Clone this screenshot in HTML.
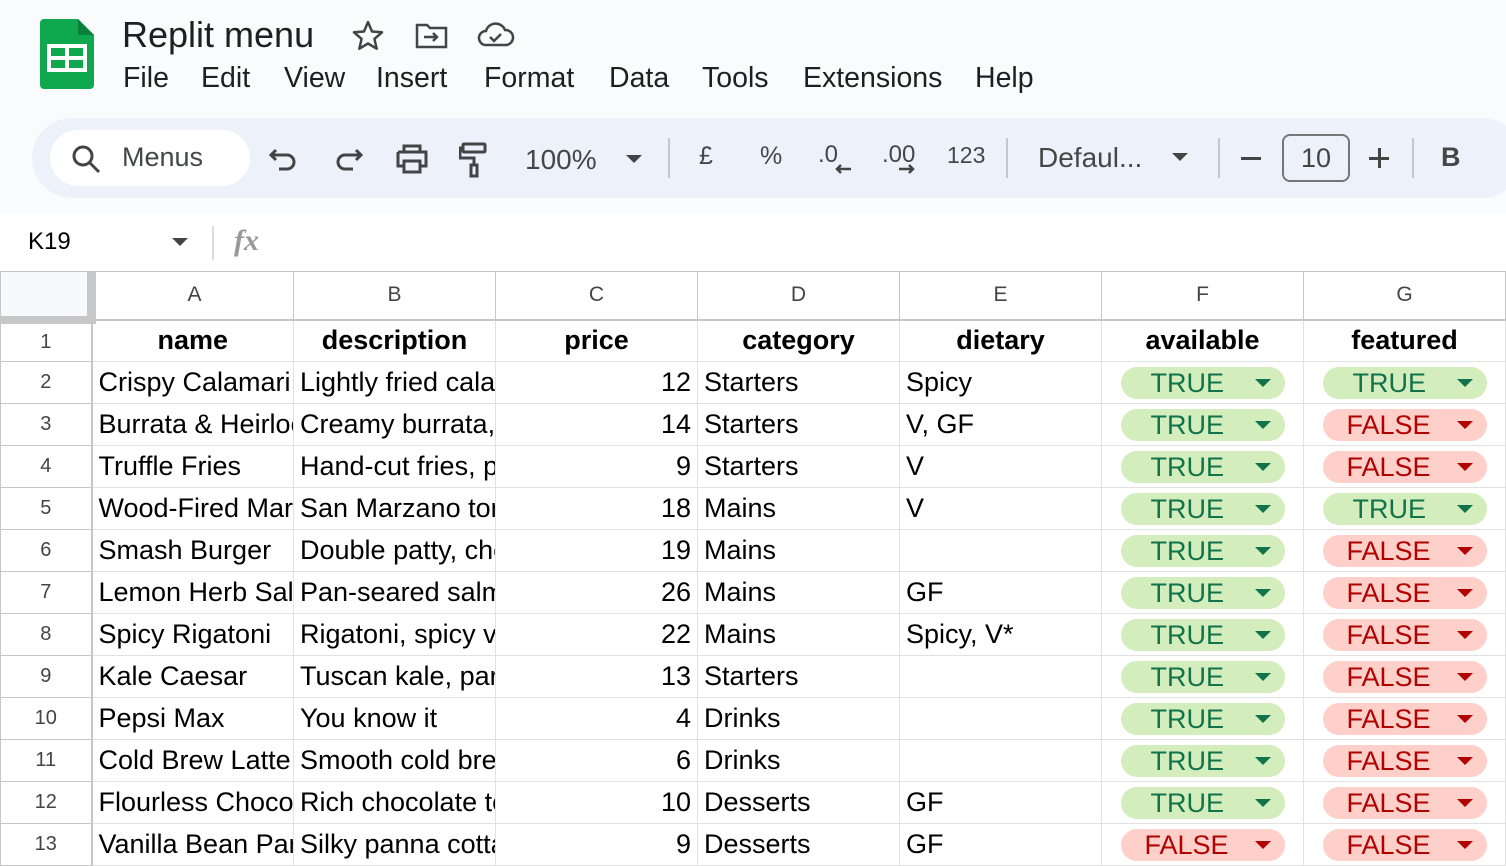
<!DOCTYPE html>
<html><head><meta charset="utf-8"><style>
*{margin:0;padding:0;box-sizing:border-box}
body{width:1506px;height:866px;overflow:hidden;background:#f9fbfd;font-family:"Liberation Sans",Arial,sans-serif;position:relative;color:#1f1f1f}
.abs{position:absolute}
.title{left:122px;top:14px;font-size:36px;color:#1f1f1f}
.menu{top:62px;font-size:28.5px;color:#1f1f1f}
.tb{left:32px;top:118px;width:1490px;height:80px;background:#edf2fa;border-radius:40px}
.search{left:50px;top:130px;width:200px;height:56px;background:#fff;border-radius:28px}
.ti{top:142px;font-size:27px;color:#444746}
.sep{width:2px;height:40px;background:#c7c7c7;top:138px}
.fb{left:0;top:213px;width:1506px;height:58px;background:#fff}
table{position:absolute;left:0;top:271px;width:1505px;border-collapse:collapse;table-layout:fixed;background:#fff}
td{border:1px solid #e1e1e1;height:42px;font-size:27px;white-space:nowrap;overflow:hidden;padding:0 6px;color:#000;max-width:202px}
tr.h td{height:48px;text-align:center;color:#444;font-size:21px;border-color:#c7c7c7;border-bottom:2px solid #c7c7c7}
td.r{text-align:center;color:#444;font-size:20px;border-right:2px solid #c7c7c7;border-color:#c7c7c7;padding:0}
td.b{font-weight:bold;text-align:center}
td.n{text-align:right}
.chip{display:block;margin:0 auto;width:164px;height:32px;border-radius:16px;position:relative;font-size:27px;line-height:32px;padding-left:30px;text-align:left}
.t{background:#d4edbc;color:#11734b}
.f{background:#ffcfc9;color:#b10202;padding-left:24px}
.chip:after{content:"";position:absolute;right:14px;top:12px;border-left:8px solid transparent;border-right:8px solid transparent;border-top:8px solid currentColor}
td.c{padding:0}
</style></head><body>
<svg class="abs" style="left:40px;top:19px" width="54" height="70" viewBox="0 0 54 70"><path d="M4 0h34l16 16v50a4 4 0 0 1-4 4H4a4 4 0 0 1-4-4V4a4 4 0 0 1 4-4z" fill="#0fa84f"/><path d="M38 0v16h16z" fill="#0a7f3a"/><rect x="9" y="27" width="36" height="24" fill="none" stroke="#fff" stroke-width="4"/><path d="M9 39h36M27 27v24" stroke="#fff" stroke-width="4"/></svg>
<div class="abs title">Replit menu</div>
<svg class="abs" style="left:352px;top:20px" width="32" height="30" viewBox="0 0 32 30"><path d="M16 2l4 9.5 10 .8-7.6 6.6 2.3 9.8L16 23.5l-8.7 5.2 2.3-9.8L2 12.3l10-.8z" fill="none" stroke="#444" stroke-width="2.5" stroke-linejoin="round"/></svg>
<svg class="abs" style="left:415px;top:22px" width="34" height="28" viewBox="0 0 34 28"><path d="M2 3h10l3 3h16v19H2z" fill="none" stroke="#444" stroke-width="2.5"/><path d="M9 15h13M18 11l4 4-4 4" fill="none" stroke="#444" stroke-width="2.5"/></svg>
<svg class="abs" style="left:477px;top:22px" width="38" height="26" viewBox="0 0 38 26"><path d="M9 23a7 7 0 0 1 0-14 10 10 0 0 1 19-1 7.5 7.5 0 0 1 1 15z" fill="none" stroke="#444" stroke-width="2.5"/><path d="M13 15l4 4 7-7" fill="none" stroke="#444" stroke-width="2.5"/></svg>
<div class="abs menu" style="left:123px">File</div>
<div class="abs menu" style="left:201px">Edit</div>
<div class="abs menu" style="left:284px">View</div>
<div class="abs menu" style="left:376px">Insert</div>
<div class="abs menu" style="left:484px">Format</div>
<div class="abs menu" style="left:609px">Data</div>
<div class="abs menu" style="left:702px">Tools</div>
<div class="abs menu" style="left:803px">Extensions</div>
<div class="abs menu" style="left:975px">Help</div>
<div class="abs tb"></div>
<div class="abs search"></div>
<svg class="abs" style="left:70px;top:143px" width="32" height="32" viewBox="0 0 32 32"><circle cx="13" cy="13" r="9" fill="none" stroke="#444" stroke-width="3"/><path d="M20 20l9 9" stroke="#444" stroke-width="3"/></svg>
<div class="abs ti" style="left:122px">Menus</div>
<svg class="abs" style="left:268px;top:144px" width="32" height="30" viewBox="0 0 32 30"><path d="M8 6L3 11l5 5M3 11h16a7 7 0 0 1 0 14H11" fill="none" stroke="#444" stroke-width="3"/></svg>
<svg class="abs" style="left:332px;top:144px" width="32" height="30" viewBox="0 0 32 30"><path d="M24 6l5 5-5 5M29 11H13a7 7 0 0 0 0 14h8" fill="none" stroke="#444" stroke-width="3"/></svg>
<svg class="abs" style="left:395px;top:143px" width="34" height="32" viewBox="0 0 34 32"><path d="M9 9V3h16v6M3 9h28v14h-6M9 23H3V9" fill="none" stroke="#444" stroke-width="3"/><rect x="9" y="18" width="16" height="11" fill="none" stroke="#444" stroke-width="3"/></svg>
<svg class="abs" style="left:459px;top:142px" width="30" height="36" viewBox="0 0 30 36"><rect x="4" y="2" width="22" height="8" rx="1" fill="none" stroke="#444" stroke-width="3"/><path d="M4 6H1v10h14v7" fill="none" stroke="#444" stroke-width="3"/><rect x="12" y="23" width="6" height="11" fill="none" stroke="#444" stroke-width="3"/></svg>
<div class="abs ti" style="left:525px;top:144px;font-size:28px">100%</div>
<div class="abs" style="left:626px;top:155px;border-left:8px solid transparent;border-right:8px solid transparent;border-top:8px solid #444"></div>
<div class="abs sep" style="left:668px"></div>
<div class="abs ti" style="left:699px;font-size:25px">£</div>
<div class="abs ti" style="left:760px;font-size:25px">%</div>
<div class="abs ti" style="left:818px;top:141px;font-size:24px">.0</div>
<svg class="abs" style="left:834px;top:163px" width="18" height="12" viewBox="0 0 18 12"><path d="M17 6H3M7 2L3 6l4 4" fill="none" stroke="#444" stroke-width="2.5"/></svg>
<div class="abs ti" style="left:882px;top:141px;font-size:24px">.00</div>
<svg class="abs" style="left:898px;top:163px" width="18" height="12" viewBox="0 0 18 12"><path d="M1 6h14M11 2l4 4-4 4" fill="none" stroke="#444" stroke-width="2.5"/></svg>
<div class="abs ti" style="left:947px;font-size:23px">123</div>
<div class="abs sep" style="left:1006px"></div>
<div class="abs ti" style="left:1038px;font-size:28px">Defaul...</div>
<div class="abs" style="left:1172px;top:153px;border-left:8px solid transparent;border-right:8px solid transparent;border-top:8px solid #444"></div>
<div class="abs sep" style="left:1218px"></div>
<div class="abs" style="left:1241px;top:157px;width:20px;height:3px;background:#444"></div>
<div class="abs" style="left:1282px;top:134px;width:68px;height:48px;border:2px solid #747775;border-radius:8px;font-size:27px;color:#444;text-align:center;line-height:44px">10</div>
<div class="abs" style="left:1369px;top:157px;width:20px;height:3px;background:#444"></div>
<div class="abs" style="left:1378px;top:148px;width:3px;height:20px;background:#444"></div>
<div class="abs sep" style="left:1412px"></div>
<div class="abs ti" style="left:1441px;font-weight:bold">B</div>
<div class="abs fb"></div>
<div class="abs" style="left:28px;top:228px;font-size:24px;color:#000">K19</div>
<div class="abs" style="left:172px;top:238px;border-left:8px solid transparent;border-right:8px solid transparent;border-top:8px solid #444"></div>
<div class="abs" style="left:212px;top:226px;width:2px;height:34px;background:#ddd"></div>
<div class="abs" style="left:234px;top:224px;font-size:30px;color:#999;font-style:italic;font-weight:bold;font-family:'Liberation Serif',serif">fx</div>
<table>
<colgroup><col style="width:91px"><col style="width:202px"><col style="width:202px"><col style="width:202px"><col style="width:202px"><col style="width:202px"><col style="width:202px"><col style="width:202px"></colgroup>
<tr class="h"><td class="r" style="background:#f8f9fa;border-right:9px solid #c7c7c7;border-bottom:8px solid #c7c7c7"></td><td>A</td><td>B</td><td>C</td><td>D</td><td>E</td><td>F</td><td>G</td></tr>
<tr><td class="r">1</td><td class="b">name</td><td class="b">description</td><td class="b">price</td><td class="b">category</td><td class="b">dietary</td><td class="b">available</td><td class="b">featured</td></tr>
<tr><td class="r">2</td><td>Crispy Calamari</td><td>Lightly fried calamari</td><td class="n">12</td><td>Starters</td><td>Spicy</td><td class="c"><span class="chip t">TRUE</span></td><td class="c"><span class="chip t">TRUE</span></td></tr>
<tr><td class="r">3</td><td>Burrata &amp; Heirloom</td><td>Creamy burrata,</td><td class="n">14</td><td>Starters</td><td>V, GF</td><td class="c"><span class="chip t">TRUE</span></td><td class="c"><span class="chip f">FALSE</span></td></tr>
<tr><td class="r">4</td><td>Truffle Fries</td><td>Hand-cut fries, parm</td><td class="n">9</td><td>Starters</td><td>V</td><td class="c"><span class="chip t">TRUE</span></td><td class="c"><span class="chip f">FALSE</span></td></tr>
<tr><td class="r">5</td><td>Wood-Fired Margherita</td><td>San Marzano tomato</td><td class="n">18</td><td>Mains</td><td>V</td><td class="c"><span class="chip t">TRUE</span></td><td class="c"><span class="chip t">TRUE</span></td></tr>
<tr><td class="r">6</td><td>Smash Burger</td><td>Double patty, cheese</td><td class="n">19</td><td>Mains</td><td></td><td class="c"><span class="chip t">TRUE</span></td><td class="c"><span class="chip f">FALSE</span></td></tr>
<tr><td class="r">7</td><td>Lemon Herb Salmon</td><td>Pan-seared salmon</td><td class="n">26</td><td>Mains</td><td>GF</td><td class="c"><span class="chip t">TRUE</span></td><td class="c"><span class="chip f">FALSE</span></td></tr>
<tr><td class="r">8</td><td>Spicy Rigatoni</td><td>Rigatoni, spicy vodka</td><td class="n">22</td><td>Mains</td><td>Spicy, V*</td><td class="c"><span class="chip t">TRUE</span></td><td class="c"><span class="chip f">FALSE</span></td></tr>
<tr><td class="r">9</td><td>Kale Caesar</td><td>Tuscan kale, parmesan</td><td class="n">13</td><td>Starters</td><td></td><td class="c"><span class="chip t">TRUE</span></td><td class="c"><span class="chip f">FALSE</span></td></tr>
<tr><td class="r">10</td><td>Pepsi Max</td><td>You know it</td><td class="n">4</td><td>Drinks</td><td></td><td class="c"><span class="chip t">TRUE</span></td><td class="c"><span class="chip f">FALSE</span></td></tr>
<tr><td class="r">11</td><td>Cold Brew Latte</td><td>Smooth cold brew</td><td class="n">6</td><td>Drinks</td><td></td><td class="c"><span class="chip t">TRUE</span></td><td class="c"><span class="chip f">FALSE</span></td></tr>
<tr><td class="r">12</td><td>Flourless Chocolate</td><td>Rich chocolate torte</td><td class="n">10</td><td>Desserts</td><td>GF</td><td class="c"><span class="chip t">TRUE</span></td><td class="c"><span class="chip f">FALSE</span></td></tr>
<tr><td class="r">13</td><td>Vanilla Bean Panna</td><td>Silky panna cotta</td><td class="n">9</td><td>Desserts</td><td>GF</td><td class="c"><span class="chip f">FALSE</span></td><td class="c"><span class="chip f">FALSE</span></td></tr>
</table>
</body></html>
